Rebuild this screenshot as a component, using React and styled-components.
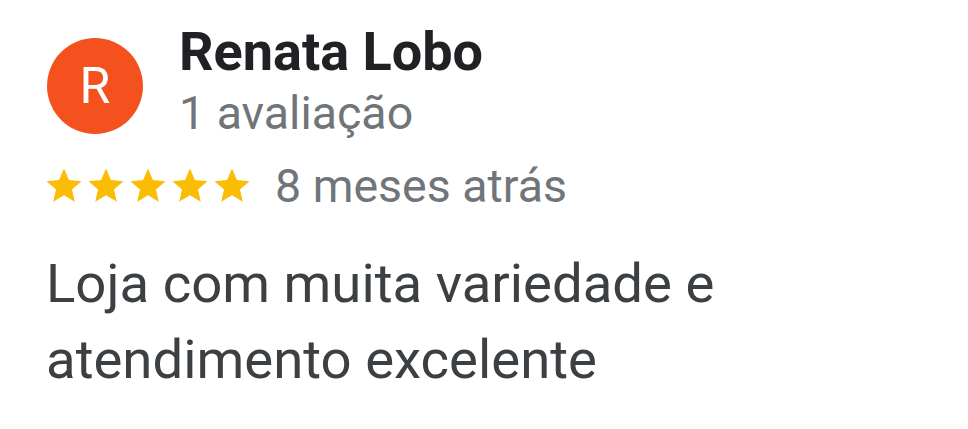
import React from "react";
import styled, { createGlobalStyle } from "styled-components";

const GlobalStyle = createGlobalStyle`
  body {
    margin: 0;
    background: #ffffff;
    font-family: Roboto, "Noto Sans", sans-serif;
  }
`;

const Review = styled.div`
  display: flex;
  flex-direction: column;
  padding: 20px 0 0 46px;
`;

const Header = styled.div`
  display: flex;
  align-items: flex-start;
`;

const Avatar = styled.div`
  width: 96px;
  height: 96px;
  margin: 18px 0 0 1px;
  border-radius: 50%;
  background: #f4511e;
  color: #ffffff;
  display: flex;
  align-items: center;
  justify-content: center;
  font-size: 50px;
  font-weight: 400;
  flex-shrink: 0;
`;

const Author = styled.div`
  display: flex;
  flex-direction: column;
  margin-left: 36px;
`;

const Name = styled.div`
  font-size: 54px;
  line-height: 64px;
  font-weight: 700;
  color: #202124;
`;

const Meta = styled.div`
  font-size: 46.5px;
  line-height: 58px;
  color: #70757a;
`;

const RatingRow = styled.div`
  display: flex;
  align-items: center;
  margin-top: 15px;
`;

const Stars = styled.div`
  display: flex;
  margin-left: -3px;
  margin-right: 22px;
`;

const Body = styled.p`
  margin: 30px 0 0;
  font-size: 54.5px;
  line-height: 76px;
  color: #3c4043;
`;

function Star() {
  return (
    <svg width="42" height="42" viewBox="0 0 24 24">
      <path
        fill="#fbbc04"
        d="M12 17.27L18.18 21l-1.64-7.03L22 9.24l-7.19-.61L12 2 9.19 8.63 2 9.24l5.46 4.73L5.82 21z"
      />
    </svg>
  );
}

export default function App() {
  return (
    <>
      <GlobalStyle />
      <Review>
        <Header>
          <Avatar>R</Avatar>
          <Author>
            <Name>Renata Lobo</Name>
            <Meta>1 avaliação</Meta>
          </Author>
        </Header>
        <RatingRow>
          <Stars>
            {[0, 1, 2, 3, 4].map((i) => (
              <Star key={i} />
            ))}
          </Stars>
          <Meta>8 meses atrás</Meta>
        </RatingRow>
        <Body>
          Loja com muita variedade e
          <br />
          atendimento excelente
        </Body>
      </Review>
    </>
  );
}
